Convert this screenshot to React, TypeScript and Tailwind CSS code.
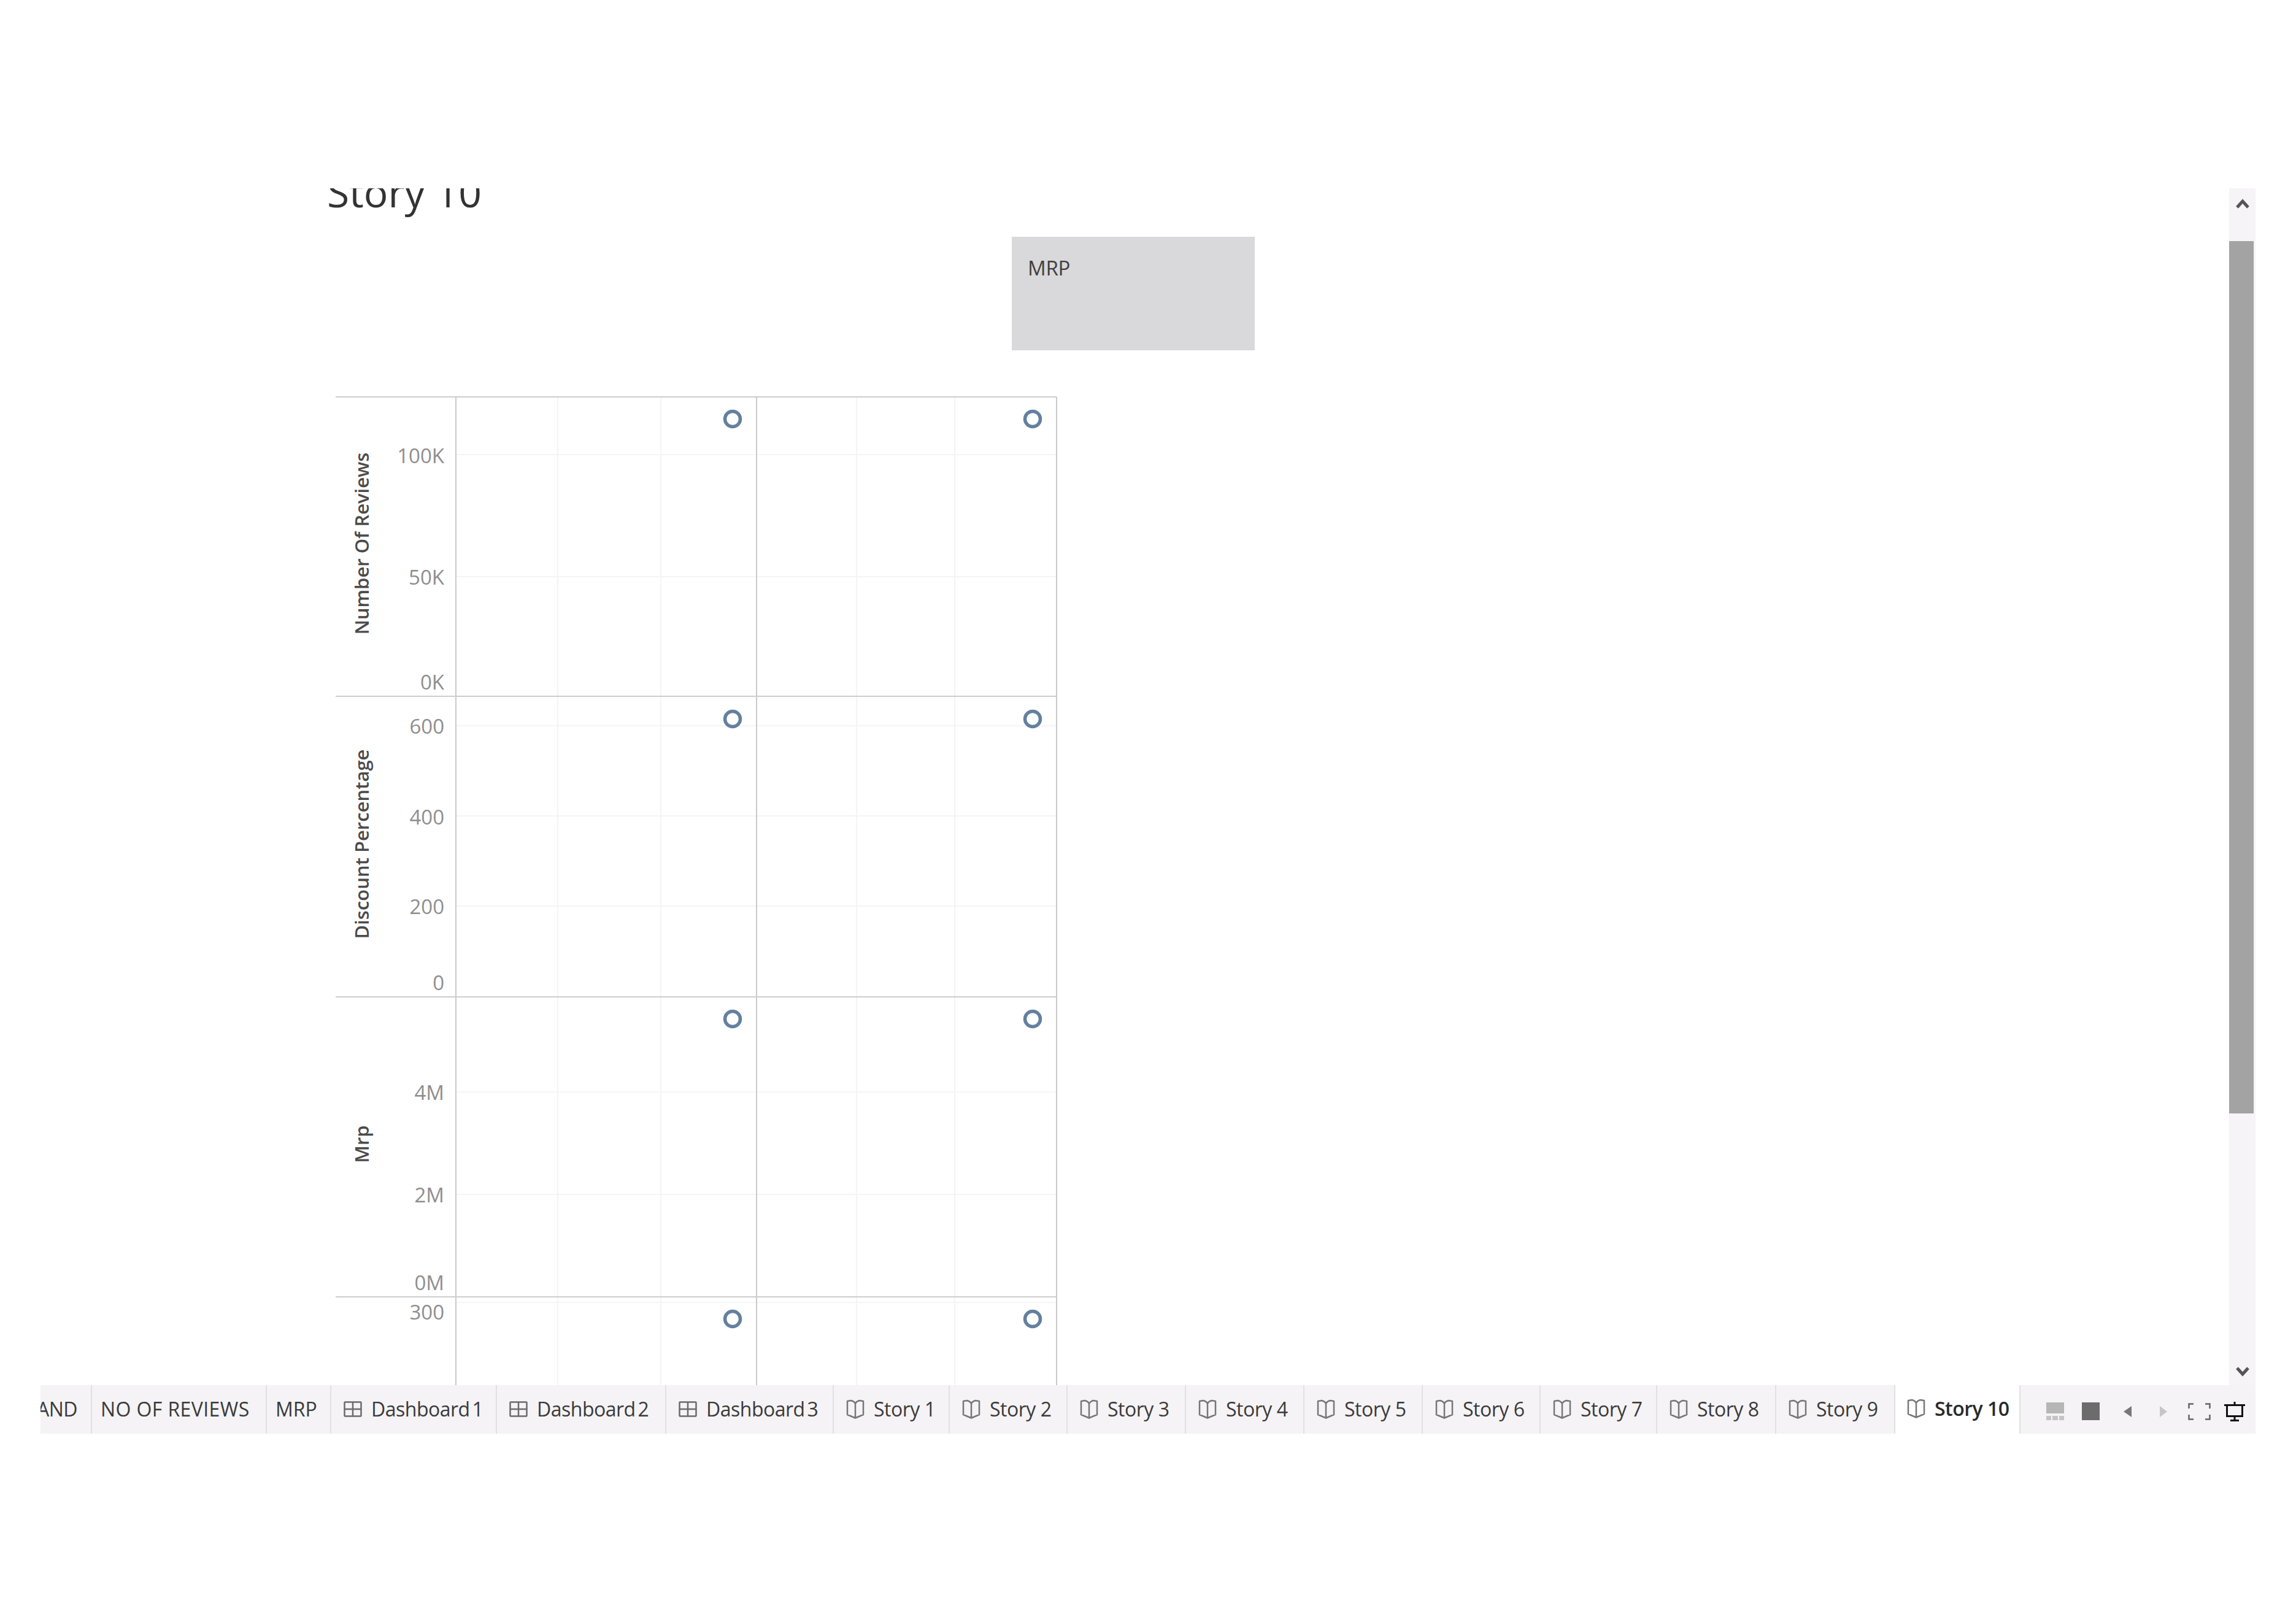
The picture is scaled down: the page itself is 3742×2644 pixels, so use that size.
const openSans = "font-['Open_Sans',sans-serif]";

const tabs = [
  { label: "NO OF REVIEWS", width: "w-[285px]", spacing: "tracking-[0.4px]" },
  { label: "MRP", width: "w-[105px]", spacing: "tracking-[0px]" },
  { label: "Dashboard 1", width: "w-[270px]", icon: "grid", spacing: "[word-spacing:-4px]" },
  { label: "Dashboard 2", width: "w-[276px]", icon: "grid", spacing: "[word-spacing:-4px]" },
  { label: "Dashboard 3", width: "w-[273px]", icon: "grid", spacing: "[word-spacing:-4px]" },
  { label: "Story 1", width: "w-[189px]", icon: "book" },
  { label: "Story 2", width: "w-[192px]", icon: "book" },
  { label: "Story 3", width: "w-[193px]", icon: "book" },
  { label: "Story 4", width: "w-[193px]", icon: "book" },
  { label: "Story 5", width: "w-[193px]", icon: "book" },
  { label: "Story 6", width: "w-[192px]", icon: "book" },
  { label: "Story 7", width: "w-[190px]", icon: "book" },
  { label: "Story 8", width: "w-[194px]", icon: "book" },
  { label: "Story 9", width: "w-[194px]", icon: "book" },
];

const lightColumns = [909, 1077, 1396, 1556];
const strongColumns = [743, 1233, 1722];
const paneLines = [647, 1135, 1625, 2114];
const gridRows = [741, 940, 1183, 1330, 1477, 1780, 1947, 2123];
const dotRows = [683, 1172, 1661, 2150];
const dotColumns = [1194, 1683];

const ticks = [
  { label: "100K", y: 742 },
  { label: "50K", y: 940 },
  { label: "0K", y: 1111 },
  { label: "600", y: 1183 },
  { label: "400", y: 1331 },
  { label: "200", y: 1477 },
  { label: "0", y: 1601 },
  { label: "4M", y: 1780 },
  { label: "2M", y: 1947 },
  { label: "0M", y: 2090 },
  { label: "300", y: 2138 },
];

const axisTitles = [
  { label: "Number Of Reviews", y: 886 },
  { label: "Discount Percentage", y: 1376 },
  { label: "Mrp", y: 1865 },
];

function GridIcon() {
  return (
    <svg width="30" height="26" viewBox="0 0 30 26" fill="none" stroke="#6b6b6b" strokeWidth="2.5" className="shrink-0">
      <rect x="1.5" y="1.5" width="27" height="23" rx="1" />
      <path d="M15 1.5V24.5M1.5 13H28.500" />
    </svg>
  );
}

function BookIcon() {
  return (
    <svg width="30" height="32" viewBox="0 0 30 32" fill="none" stroke="#777777" strokeWidth="2.5" className="shrink-0">
      <path d="M2 3L8 2Q13 3 15 7Q17 3 22 2L28 3V25L15 30.500L2 25ZM15 7V30.500" strokeLinejoin="round" />
    </svg>
  );
}

function Chart() {
  return (
    <svg width="1190" height="1620" viewBox="547 646 1190 1620" className={`ml-[481px] mt-[75px] block ${openSans}`}>
      {lightColumns.map((x) => (
        <line key={x} x1={x} x2={x} y1={647} y2={2266} stroke="#f4f4f4" strokeWidth="2" />
      ))}
      {gridRows.map((y) => (
        <line key={y} x1={743} x2={1722} y1={y} y2={y} stroke="#f5f5f5" strokeWidth="2" />
      ))}
      {strongColumns.map((x) => (
        <line key={x} x1={x} x2={x} y1={647} y2={2266} stroke="#cacaca" strokeWidth="2" />
      ))}
      {paneLines.map((y) => (
        <line key={y} x1={547} x2={1722} y1={y} y2={y} stroke="#cdcdcd" strokeWidth="2" />
      ))}
      {dotRows.map((y) =>
        dotColumns.map((x) => (
          <circle key={`${x}-${y}`} cx={x} cy={y} r="12.500" fill="#ffffff" stroke="#64809f" strokeWidth="5.500" />
        )),
      )}
      {ticks.map((t) => (
        <text key={t.label} x={724} y={t.y} textAnchor="end" dominantBaseline="central" fontSize="33" fill="#8e8e8e">
          {t.label}
        </text>
      ))}
      {axisTitles.map((t) => (
        <text
          key={t.label}
          x={589}
          y={t.y}
          textAnchor="middle"
          dominantBaseline="central"
          fontSize="31"
          fontWeight="600"
          fill="#4b4b4b"
          transform={`rotate(-90 589 ${t.y})`}
        >
          {t.label}
        </text>
      ))}
    </svg>
  );
}

function Scrollbar() {
  return (
    <div className="flex w-[43px] shrink-0 flex-col bg-[#f6f4f6]">
      <div className="flex h-[86px] items-start justify-center pt-[17px]">
        <svg width="22" height="16" viewBox="0 0 22 16" fill="none" stroke="#555555" strokeWidth="5">
          <path d="M2 14L11 4L20 14" />
        </svg>
      </div>
      <div className="h-[1422px] w-[40px] bg-[#a3a3a3]" />
      <div className="flex flex-1 items-end justify-center pb-[14px]">
        <svg width="22" height="16" viewBox="0 0 22 16" fill="none" stroke="#555555" strokeWidth="5">
          <path d="M2 2L11 12L20 2" />
        </svg>
      </div>
    </div>
  );
}

function TabControls() {
  return (
    <div className="flex flex-1 items-center bg-[#f5f3f5] pl-[42px] pt-[6px]">
      <div className="flex w-[29px] flex-col gap-[4px]">
        <div className="h-[18px] bg-[#b6b6b6]" />
        <div className="flex h-[7px] gap-[2px]">
          <div className="flex-1 bg-[#c4c4c4]" />
          <div className="flex-1 bg-[#c4c4c4]" />
          <div className="flex-1 bg-[#c4c4c4]" />
        </div>
      </div>
      <div className="ml-[29px] h-[29px] w-[29px] bg-[#6c6c6c]" />
      <svg width="13" height="18" viewBox="0 0 13 18" className="ml-[39px]">
        <path d="M13 0V18L0 9Z" fill="#777777" />
      </svg>
      <svg width="12" height="18" viewBox="0 0 12 18" className="ml-[46px]">
        <path d="M0 0V18L12 9Z" fill="#c6c6c6" />
      </svg>
      <svg width="37" height="28" viewBox="0 0 37 28" fill="none" stroke="#666666" strokeWidth="2.500" className="ml-[34px]">
        <path d="M1.500 9V1.500H9M28 1.500H35.500V9M35.500 19V26.500H28M9 26.500H1.500V19" />
      </svg>
      <svg width="34" height="32" viewBox="0 0 34 32" fill="none" stroke="#111111" className="ml-[22px]">
        <path d="M0 5.500H34M17 0V5M17 25V31M10 30.500H24" strokeWidth="3" />
        <path d="M0 4H34V7H0Z" fill="#111111" strokeWidth="0" />
        <path d="M4.500 6V23.500H29.500V6" strokeWidth="3" />
      </svg>
    </div>
  );
}

function TabBar() {
  return (
    <div className={`mx-[66px] flex h-[79px] ${openSans} text-[32px] tracking-[-0.5px] text-[#3a3a3a]`}>
      <div className="flex w-[84px] shrink-0 items-center justify-end overflow-hidden border-r-2 border-[#e2e0e2] bg-[#f5f3f5] pr-[22px] pb-[2px]">
        AND
      </div>
      {tabs.map((tab) => (
        <div
          key={tab.label}
          className={`flex shrink-0 items-center border-r-2 border-[#e2e0e2] bg-[#f5f3f5] pb-[2px] ${tab.width} ${
            tab.icon ? "gap-[15px] pl-[20px]" : "pl-[14px]"
          }`}
        >
          {tab.icon === "grid" && <GridIcon />}
          {tab.icon === "book" && <BookIcon />}
          <span className={`whitespace-nowrap ${tab.spacing ?? ""}`}>{tab.label}</span>
        </div>
      ))}
      <div className="flex w-[204px] shrink-0 items-center gap-[15px] border-r-2 border-[#e2e0e2] bg-white pb-[4px] pl-[19px] font-semibold text-[#2a2a2a]">
        <BookIcon />
        <span className="whitespace-nowrap">Story 10</span>
      </div>
      <TabControls />
    </div>
  );
}

export default function App() {
  return (
    <div className="h-[2644px] w-[3742px] overflow-hidden bg-white pt-[307px]">
      <div className="mx-[66px] flex h-[1951px]">
        <div className="min-w-0 flex-1 overflow-hidden">
          <h1 className={`-mt-[45px] ml-[467px] h-[100px] text-[66px] leading-[100px] text-[#333333] ${openSans}`}>
            Story 10
          </h1>
          <div className="ml-[1583px] mt-[24px] h-[185px] w-[396px] bg-[#d9d8da] pl-[26px] pt-[27px]">
            <span className={`text-[33px] leading-[48px] tracking-[-0.3px] text-[#3f3f3f] ${openSans}`}>MRP</span>
          </div>
          <Chart />
        </div>
        <Scrollbar />
      </div>
      <TabBar />
    </div>
  );
}
